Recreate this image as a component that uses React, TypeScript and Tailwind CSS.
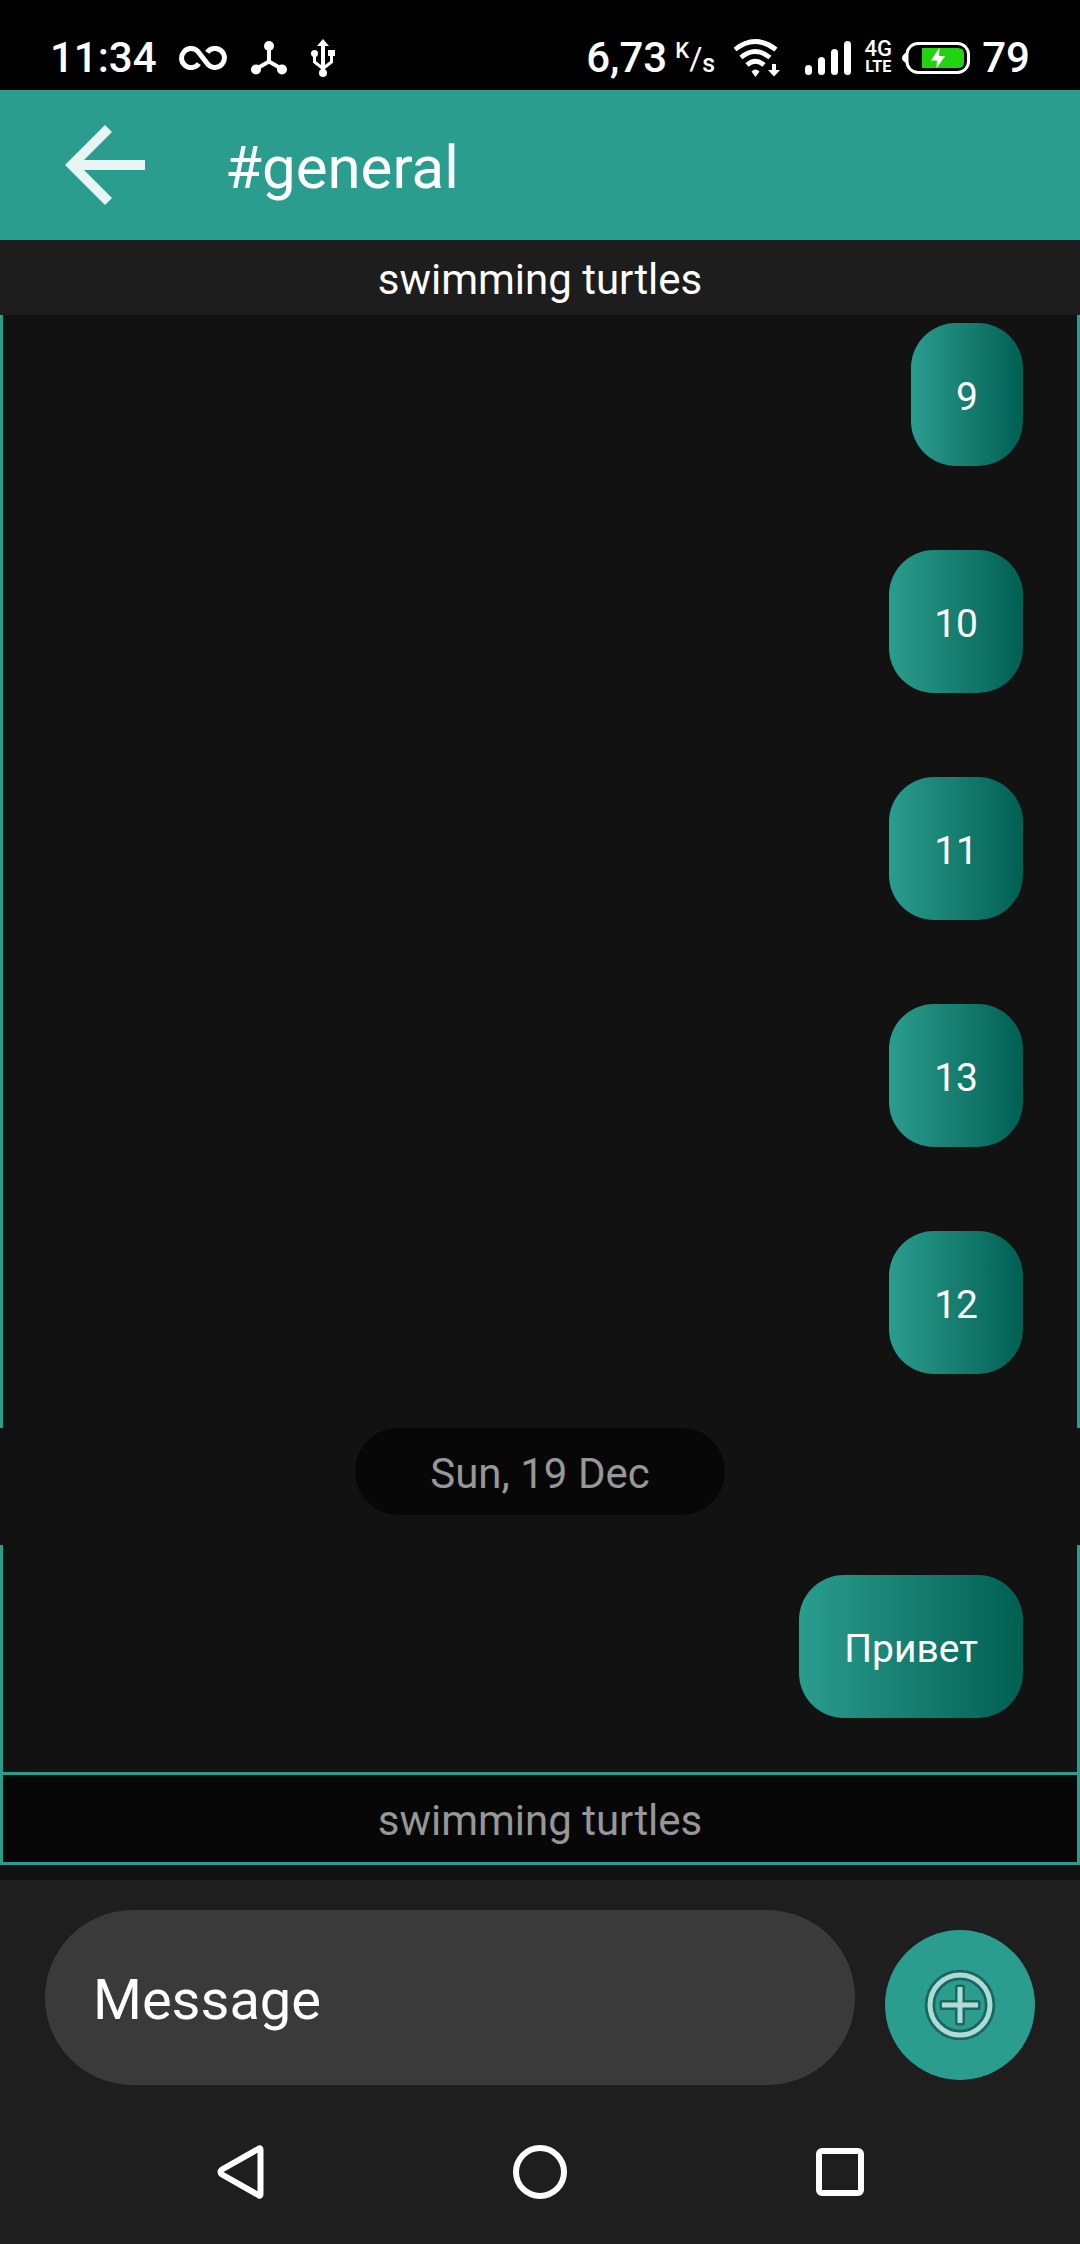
import React from 'react';

function InfinityIcon() {
  return (
    <svg className="h-6 w-12" viewBox="0 0 48 24" fill="none" stroke="white" strokeWidth="5" aria-hidden="true">
      <path d="M19.8 17.6A9.5 9.5 0 1 1 18.7 5.3L29.3 18.7A9.5 9.5 0 1 0 28.2 6.4" />
    </svg>
  );
}

function HubIcon() {
  return (
    <svg className="h-[34px] w-9" viewBox="0 0 36 34" aria-hidden="true">
      <path d="M18 5v15.500M5 28l13-7.500 13 7.500" fill="none" stroke="white" strokeWidth="4" />
      <g fill="white">
        <circle cx="18" cy="5" r="5" />
        <circle cx="5" cy="28.500" r="5" />
        <circle cx="31" cy="28.500" r="5" />
      </g>
    </svg>
  );
}

function UsbIcon() {
  return (
    <svg className="h-[38px] w-6" viewBox="0 0 24 38" aria-hidden="true">
      <path d="M12 5v28M3.500 15v8L12 29.500 20.500 23v-8" fill="none" stroke="white" strokeWidth="3" />
      <path d="M10 5h4v28h-4z" fill="white" />
      <g fill="white">
        <path d="M12 0l6 7H6z" />
        <circle cx="12" cy="34" r="4" />
        <circle cx="3.500" cy="14.500" r="3.500" />
        <path d="M17 11h7v6h-7z" />
      </g>
    </svg>
  );
}

function WifiIcon() {
  return (
    <svg className="h-[38px] w-[47px]" viewBox="0 0 47 38" aria-hidden="true">
      <g fill="none" stroke="white" strokeWidth="4.800">
        <path d="M2 10.500Q22-5.500 43 10.500" />
        <path d="M8 18.500Q22 6.500 37 18.500" />
        <path d="M14 26Q22.500 18.500 31 26" />
      </g>
      <g fill="white">
        <path d="M18.500 32.500Q22.500 28.500 26.500 32.500L22.500 38z" />
        <path d="M39 25h4v6h4l-6 6.500-6-6.500h4z" />
      </g>
    </svg>
  );
}

function SignalIcon() {
  return (
    <svg className="h-[34px] w-12" viewBox="0 0 48 34" fill="white" aria-hidden="true">
      <rect x="1" y="24" width="7" height="10" rx="3.500" />
      <rect x="14" y="16" width="7" height="18" rx="3.500" />
      <rect x="27" y="8" width="7" height="26" rx="3.500" />
      <rect x="40" y="0" width="7" height="34" rx="3.500" />
    </svg>
  );
}

function BatteryIcon() {
  return (
    <svg className="h-8 w-[68px]" viewBox="0 0 68 32" aria-hidden="true">
      <rect x="5" y="1.500" width="61.500" height="29" rx="11" fill="none" stroke="white" strokeWidth="3" />
      <path d="M5 10Q0 13 0 16t5 5.500z" fill="white" />
      <path d="M20 6h36q6 0 6 6v8q0 6-6 6H20z" fill="#22d312" />
      <path d="M37.500 5.500L29 18.500h6L34.500 26.500 43 14h-6z" fill="white" />
    </svg>
  );
}

function StatusBar() {
  return (
    <div className="flex h-[90px] items-center justify-between bg-black px-[50px] pt-[26px] text-[42px] font-medium leading-none">
      <div className="flex items-center">
        <span>11:34</span>
        <div className="ml-[22px] flex items-center gap-6">
          <InfinityIcon />
          <HubIcon />
          <UsbIcon />
        </div>
      </div>
      <div className="flex items-center">
        <span>6,73</span>
        <span className="ml-2 flex h-9 w-[38px] text-[22px] leading-none">
          <span>K</span>
          <span className="text-[32px] font-normal leading-9">/</span>
          <span className="self-end text-[25px] leading-6">s</span>
        </span>
        <div className="ml-5 flex items-center">
          <WifiIcon />
        </div>
        <div className="ml-6 flex">
          <SignalIcon />
        </div>
        <span className="ml-[14px] flex w-6 flex-col items-center text-[22px] leading-[18px]">
          <span>4G</span>
          <span className="text-[16px] font-bold">LTE</span>
        </span>
        <div className="ml-3 flex">
          <BatteryIcon />
        </div>
        <span className="ml-3">79</span>
      </div>
    </div>
  );
}

function Header() {
  return (
    <header className="flex h-[150px] items-center bg-[#2a9d8f] pl-[65px]">
      <button type="button" aria-label="Back" className="flex size-20">
        <svg className="size-20" viewBox="0 0 80 80" fill="#e9f5f3" aria-hidden="true">
          <path d="M40 0l7 7L19 35h61v10H19l28 28-7 7L0 40z" />
        </svg>
      </button>
      <h1 className="ml-20 pt-1.5 text-[60px] leading-[72px]">#general</h1>
    </header>
  );
}

function Message({ text, clipped = false }: { text: string; clipped?: boolean }) {
  return (
    <li
      className={
        'flex justify-end border-x-[3px] border-[#2a9d8f] pb-[54px] pr-[54px] ' + (clipped ? 'pt-2' : 'pt-[30px]')
      }
    >
      <p className="rounded-[45px] bg-linear-to-r from-[#2a9d8f] to-[#006052] px-[45px] pb-[45px] pt-[51px] text-[39px] leading-[47px]">
        {text}
      </p>
    </li>
  );
}

const earlier = ['9', '10', '11', '13', '12'];

function Conversation() {
  return (
    <main className="flex-1 bg-[#121212] pb-[15px]">
      <ul>
        {earlier.map((text, i) => (
          <Message key={text} text={text} clipped={i === 0} />
        ))}
      </ul>
      <div className="mb-[30px] flex justify-center">
        <time className="rounded-full bg-[#070707] px-[75px] pb-4 pt-5 text-[42px] leading-[51px] text-[#979797]">
          Sun, 19 Dec
        </time>
      </div>
      <ul>
        <Message text="Привет" />
      </ul>
      <p className="border-[3px] border-[#2a9d8f] bg-[#070707] pb-4 pt-5 text-center text-[42px] leading-[51px] text-[#979797]">
        swimming turtles
      </p>
    </main>
  );
}

function Composer() {
  return (
    <form className="flex items-end gap-[30px] px-[45px] pb-[15px] pt-[30px]" onSubmit={(e) => e.preventDefault()}>
      <input
        type="text"
        aria-label="Message"
        placeholder="Message"
        className="h-[175px] min-w-0 flex-1 rounded-full bg-[#3a3a3a] px-12 pt-1 text-[56px] text-white outline-none placeholder:text-white"
      />
      <button
        type="button"
        aria-label="Add attachment"
        className="mb-[5px] flex size-[150px] items-center justify-center rounded-full bg-[#2a9d8f]"
      >
        <svg className="size-[72px]" viewBox="0 0 72 72" fill="none" aria-hidden="true">
          <g stroke="#1d665e" strokeWidth="10.500" strokeLinejoin="round">
            <circle cx="36" cy="36" r="30" />
          </g>
          <rect x="15.500" y="31" width="41" height="10" rx="2.500" fill="#1d665e" />
          <rect x="31" y="15.500" width="10" height="41" rx="2.500" fill="#1d665e" />
          <g stroke="#abdcd5" strokeWidth="5">
            <circle cx="36" cy="36" r="30" />
            <path d="M18 36h36M36 18v36" />
          </g>
        </svg>
      </button>
    </form>
  );
}

function NavigationBar() {
  return (
    <nav className="flex h-36 items-center justify-around px-[90px]">
      <button type="button" aria-label="Back" className="flex">
        <svg className="size-[60px]" viewBox="0 0 60 60" fill="none" stroke="white" strokeWidth="6" strokeLinejoin="round" aria-hidden="true">
          <path d="M49 6.500Q50.500 5.500 50.500 8v44q0 2.500-1.500 1.500L12 32.500Q9 30 12 27.500z" />
        </svg>
      </button>
      <button type="button" aria-label="Home" className="flex">
        <svg className="size-[60px]" viewBox="0 0 60 60" fill="none" stroke="white" strokeWidth="6" aria-hidden="true">
          <circle cx="30" cy="30" r="24" />
        </svg>
      </button>
      <button type="button" aria-label="Recent apps" className="flex">
        <svg className="size-[60px]" viewBox="0 0 60 60" fill="none" stroke="white" strokeWidth="6" aria-hidden="true">
          <rect x="9" y="9" width="42" height="42" rx="3" />
        </svg>
      </button>
    </nav>
  );
}

export default function App() {
  return (
    <div className="flex min-h-screen flex-col bg-[#1e1e1e] font-['Roboto',sans-serif] text-white">
      <StatusBar />
      <Header />
      <p className="bg-[#1d1d1d] pb-2.5 pt-3.5 text-center text-[42px] leading-[51px]">swimming turtles</p>
      <Conversation />
      <Composer />
      <NavigationBar />
    </div>
  );
}
